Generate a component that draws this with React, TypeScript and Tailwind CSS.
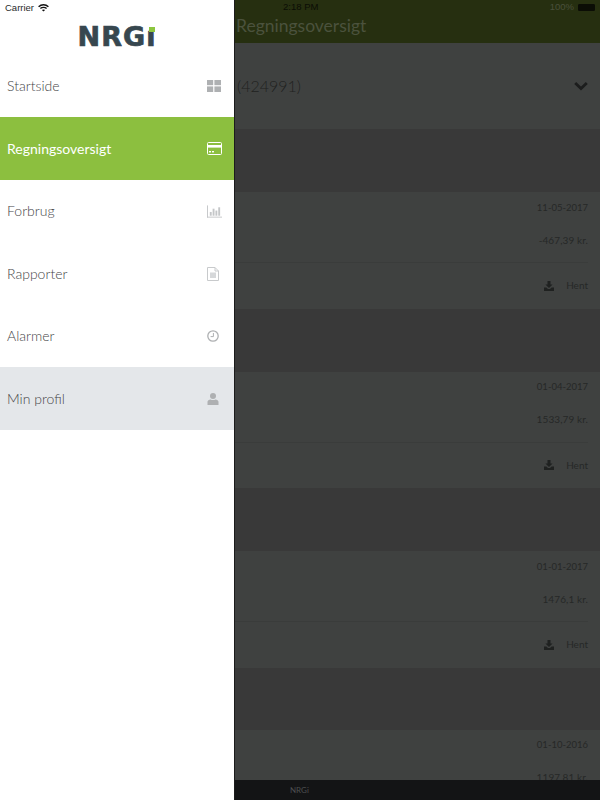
import { ReactNode } from 'react';

const lato = "font-['Lato',sans-serif]";
const system = "font-['Liberation_Sans',sans-serif]";

function GridIcon() {
  return (
    <svg width="14" height="12" viewBox="0 0 14 12" fill="#aeb0b2">
      <rect x="0" y="0" width="6.2" height="5.2" />
      <rect x="7.4" y="0" width="6.6" height="5.2" />
      <rect x="0" y="6.4" width="6.2" height="5.6" />
      <rect x="7.4" y="6.4" width="6.6" height="5.6" />
    </svg>
  );
}

function CardIcon() {
  return (
    <svg width="15" height="13" viewBox="0 0 15 13" fill="none">
      <rect x="0.5" y="0.5" width="14" height="12" rx="1" stroke="#fff" />
      <rect x="1" y="3" width="13" height="2.6" fill="#fff" />
      <rect x="2" y="9" width="2" height="1.4" fill="#fff" />
      <rect x="5" y="9" width="2" height="1.4" fill="#fff" />
    </svg>
  );
}

function ChartIcon() {
  return (
    <svg width="16" height="13" viewBox="0 0 16 13" fill="#c4c6c8">
      <rect x="0" y="0" width="1" height="13" />
      <rect x="0" y="12" width="16" height="1" />
      <rect x="3" y="7" width="2" height="4" />
      <rect x="6" y="3.5" width="2" height="7.5" />
      <rect x="9" y="5.5" width="2" height="5.5" />
      <rect x="12" y="2" width="2" height="9" />
    </svg>
  );
}

function FileIcon() {
  return (
    <svg width="12" height="14" viewBox="0 0 12 14" fill="none">
      <path d="M0.5 0.5H8L11.5 4V13.5H0.5Z" stroke="#c8cacc" />
      <path d="M8 0.5V4H11.5" stroke="#c8cacc" />
      <rect x="3" y="5.5" width="6" height="5.5" fill="#d6d8da" />
    </svg>
  );
}

function ClockIcon() {
  return (
    <svg width="12" height="12" viewBox="0 0 12 12" fill="none" stroke="#aeb0b2">
      <circle cx="6" cy="6" r="5.2" strokeWidth="1.3" />
      <path d="M6.4 3V6.6H3.6" strokeWidth="1" />
    </svg>
  );
}

function UserIcon() {
  return (
    <svg width="12" height="12" viewBox="0 0 12 12" fill="#aeb0b2">
      <circle cx="6" cy="3" r="3" />
      <path d="M0.5 12V8.8C0.5 7.4 2 6.6 3.4 6.4C5 7.2 7 7.2 8.6 6.4C10 6.6 11.5 7.4 11.5 8.8V12Z" />
    </svg>
  );
}

function DownloadIcon() {
  return (
    <svg width="10" height="10" viewBox="0 0 10 10" fill="#1f2120">
      <path d="M3.5 0H6.5V3.5H8.6L5 7L1.4 3.5H3.5Z" />
      <path d="M0 6.6H2.4L4 8H6L7.6 6.6H10V10H0Z" />
    </svg>
  );
}

const menu: { label: string; icon: ReactNode; cls: string; text: string; nudge?: string }[] = [
  { label: 'Startside', icon: <GridIcon />, cls: 'h-[62px]', text: 'text-[#444547] font-light', nudge: 'mb-[2px]' },
  { label: 'Regningsoversigt', icon: <CardIcon />, cls: 'h-[63px] bg-[#8cbf3f]', text: 'text-white' },
  { label: 'Forbrug', icon: <ChartIcon />, cls: 'h-[62.5px]', text: 'text-[#444547] font-light', nudge: 'mb-[2px]' },
  { label: 'Rapporter', icon: <FileIcon />, cls: 'h-[62.5px]', text: 'text-[#444547] font-light' },
  { label: 'Alarmer', icon: <ClockIcon />, cls: 'h-[62px]', text: 'text-[#444547] font-light', nudge: 'mb-[2px]' },
  { label: 'Min profil', icon: <UserIcon />, cls: 'h-[63px] bg-[#e4e7ea]', text: 'text-[#444547] font-light' },
];

const invoices = [
  { date: '11-05-2017', amount: '-467,39 kr.' },
  { date: '01-04-2017', amount: '1533,79 kr.' },
  { date: '01-01-2017', amount: '1476,1 kr.' },
];

function Invoice({ date, amount }: { date: string; amount: string }) {
  return (
    <>
      <div className="h-[63px] shrink-0 bg-[#393939]" />
      <div className="h-[116.5px] shrink-0 bg-[#3f4140] pr-3 text-[10px] text-[#262827]">
        <div className="flex h-[32px] items-center justify-end text-[9.5px]">{date}</div>
        <div className="flex h-[32px] items-center justify-end tracking-[0.1px]">{amount}</div>
        <div className="mt-[6px] flex h-[46px] items-center justify-end gap-[12px] border-t border-[#3a3c3b]">
          <DownloadIcon />
          <span>Hent</span>
        </div>
      </div>
    </>
  );
}

export default function App() {
  return (
    <div className={`${lato} flex h-[800px] w-[600px] overflow-hidden bg-[#3f4140]`}>
      {/* Drawer */}
      <aside className="flex h-full w-[234px] shrink-0 flex-col bg-white">
        <div className="h-[15px] pl-[5px] pt-[2px]">
          <div className={`${system} flex items-center gap-[4px] text-[9.5px] leading-[11px] text-[#2a2a2a]`}>
            Carrier
            <svg width="11" height="8" viewBox="0 0 11 8" fill="none" stroke="#111" strokeWidth="1.4">
              <path d="M0.6 2.8C3.4 0 7.6 0 10.4 2.8" />
              <path d="M2.4 4.5C4 3 7 3 8.6 4.5" />
              <path d="M5.5 7.6L3.9 6C4.8 5.3 6.2 5.3 7.1 6Z" fill="#111" stroke="none" />
            </svg>
          </div>
        </div>
        <div className="flex h-[40px] items-start justify-center pt-[7px]">
          <div className="relative font-['DejaVu_Sans',sans-serif] text-[27px] font-bold leading-[30px] tracking-[1px] text-[#37474f] [-webkit-text-stroke:0.7px_#37474f]">
            NRGı
            <span className="absolute right-[1px] top-[5px] h-[5px] w-[6px] bg-[#8cc63f]" />
          </div>
        </div>
        {menu.map((item) => (
          <div key={item.label} className={`flex shrink-0 items-center justify-between pl-[7px] pr-[12px] text-[14px] ${item.cls} ${item.text}`}>
            <span className={item.nudge}>{item.label}</span>
            <span className="flex w-[15px] justify-start">{item.icon}</span>
          </div>
        ))}
      </aside>

      {/* Dimmed content */}
      <main className="flex h-full min-w-0 flex-1 flex-col border-l border-[#1c1c1c]">
        <header className="h-[43px] shrink-0 bg-[#262f10] pl-[1px]">
          <div className={`${system} relative flex h-[15px] items-center justify-between pl-[47px] pr-[5px] text-[9.5px] text-[#0b0d05]`}>
            <span>2:18 PM</span>
            <span className="flex items-center gap-[4px] text-[#4a4f3c]">
              100%
              <span className="h-[7px] w-[17px] rounded-[1px] border border-[#0b0d05] bg-[#0b0d05]" />
            </span>
          </div>
          <div className="text-[17.5px] leading-[22px] text-[#4b523d]">Regningsoversigt</div>
        </header>
        <div className="flex h-[86px] shrink-0 items-center justify-between bg-[#3f4140] pl-[2px] pr-[12px] text-[16px] font-light text-[#1f2120]">
          <span>(424991)</span>
          <svg width="14" height="10" viewBox="0 0 14 10" fill="none" stroke="#1c1d1d" strokeWidth="2.8">
            <path d="M1.2 2L7 7.6L12.8 2" />
          </svg>
        </div>
        {invoices.map((inv) => (
          <Invoice key={inv.date} date={inv.date} amount={inv.amount} />
        ))}
        <div className="h-[62px] shrink-0 bg-[#393939]" />
        <div className="relative min-h-0 flex-1 bg-[#3f4140] pr-3 text-[10px] text-[#262827]">
          <div className="flex h-[32px] items-center justify-end text-[9.5px]">01-10-2016</div>
          <div className="flex h-[32px] items-center justify-end tracking-[0.1px]">1197,81 kr.</div>
          <footer className="absolute inset-x-0 bottom-0 flex h-[20px] items-center bg-[#131415] pl-[55px] text-[8px] text-[#4d4f50]">
            NRGi
          </footer>
        </div>
      </main>
    </div>
  );
}
